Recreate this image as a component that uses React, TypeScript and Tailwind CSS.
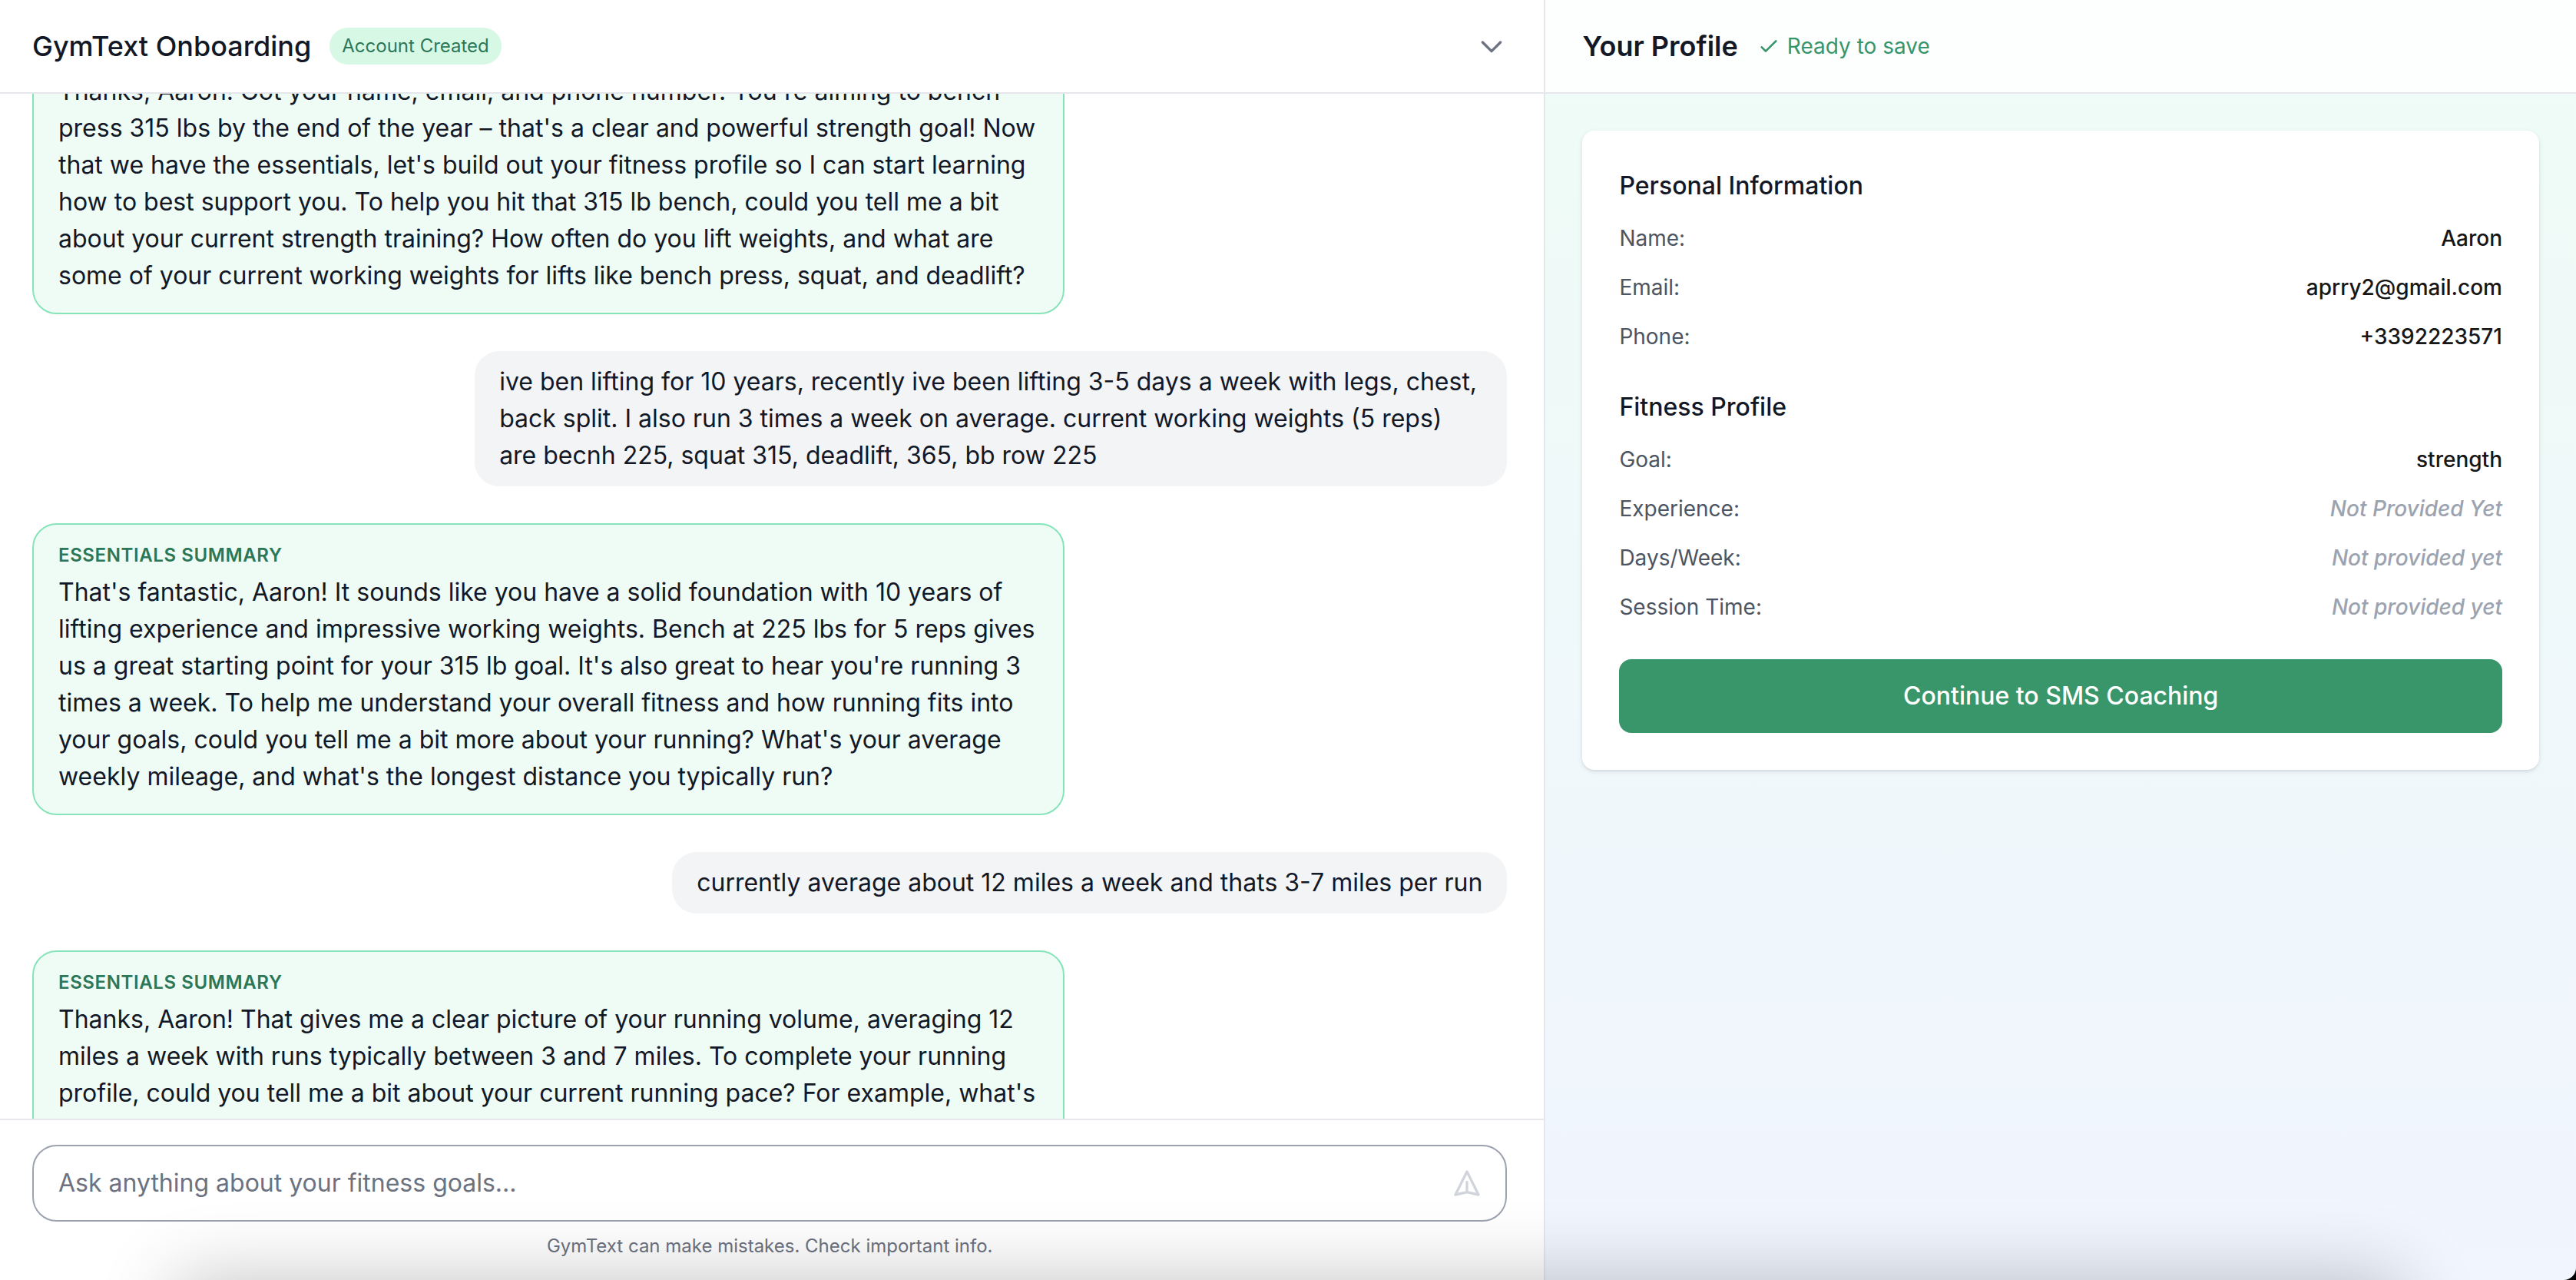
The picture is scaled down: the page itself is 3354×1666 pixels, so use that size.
import { useLayoutEffect, useRef } from "react";

type Message = { from: "coach" | "user"; label?: string; text: string };

const messages: Message[] = [
  {
    from: "coach",
    text: "Thanks, Aaron! Got your name, email, and phone number. You're aiming to bench press 315 lbs by the end of the year – that's a clear and powerful strength goal! Now that we have the essentials, let's build out your fitness profile so I can start learning how to best support you. To help you hit that 315 lb bench, could you tell me a bit about your current strength training? How often do you lift weights, and what are some of your current working weights for lifts like bench press, squat, and deadlift?",
  },
  {
    from: "user",
    text: "ive ben lifting for 10 years, recently ive been lifting 3-5 days a week with legs, chest, back split. I also run 3 times a week on average. current working weights (5 reps) are becnh 225, squat 315, deadlift, 365, bb row 225",
  },
  {
    from: "coach",
    label: "Essentials Summary",
    text: "That's fantastic, Aaron! It sounds like you have a solid foundation with 10 years of lifting experience and impressive working weights. Bench at 225 lbs for 5 reps gives us a great starting point for your 315 lb goal. It's also great to hear you're running 3 times a week. To help me understand your overall fitness and how running fits into your goals, could you tell me a bit more about your running? What's your average weekly mileage, and what's the longest distance you typically run?",
  },
  { from: "user", text: "currently average about 12 miles a week and thats 3-7 miles per run" },
  {
    from: "coach",
    label: "Essentials Summary",
    text: "Thanks, Aaron! That gives me a clear picture of your running volume, averaging 12 miles a week with runs typically between 3 and 7 miles. To complete your running profile, could you tell me a bit about your current running pace? For example, what's",
  },
];

const sections = [
  {
    title: "Personal Information",
    rows: [
      { label: "Name:", value: "Aaron", known: true },
      { label: "Email:", value: "aprry2@gmail.com", known: true },
      { label: "Phone:", value: "+3392223571", known: true },
    ],
  },
  {
    title: "Fitness Profile",
    rows: [
      { label: "Goal:", value: "strength", known: true },
      { label: "Experience:", value: "Not Provided Yet", known: false },
      { label: "Days/Week:", value: "Not provided yet", known: false },
      { label: "Session Time:", value: "Not provided yet", known: false },
    ],
  },
];

function Icon({ d, className }: { d: string; className: string }) {
  return (
    <svg
      viewBox="0 0 24 24"
      fill="none"
      stroke="currentColor"
      strokeWidth={2}
      strokeLinecap="round"
      strokeLinejoin="round"
      aria-hidden="true"
      className={className}
    >
      <path d={d} />
    </svg>
  );
}

function Bubble({ message }: { message: Message }) {
  if (message.from === "user") {
    return (
      <li className="max-w-[70%] self-end rounded-[32px] bg-[#f3f4f6] px-8 py-4">
        <p>{message.text}</p>
      </li>
    );
  }
  return (
    <li className="min-h-80 w-[70%] rounded-[32px] border-2 border-[#87e4ba] bg-[#effcf6] px-8 py-6">
      {message.label && (
        <h2 className="mb-2 text-2xl leading-8 font-semibold tracking-wide text-[#2b7758] uppercase">
          {message.label}
        </h2>
      )}
      <p>{message.text}</p>
    </li>
  );
}

function Conversation() {
  const scroller = useRef<HTMLDivElement>(null);

  useLayoutEffect(() => {
    if (scroller.current) scroller.current.scrollTop = 85;
  }, []);

  return (
    <div
      ref={scroller}
      className="min-h-0 flex-1 overflow-y-auto pt-8 pr-12 pb-12 pl-[42px] [scrollbar-width:none]"
    >
      <ul className="flex flex-col gap-12 text-[32px] leading-[48px]">
        {messages.map((message) => (
          <Bubble key={message.text} message={message} />
        ))}
      </ul>
    </div>
  );
}

function ChatPanel() {
  return (
    <main className="flex w-3/5 flex-col border-r-2 border-[#e5e7eb] bg-white">
      <header className="flex items-center justify-between border-b-2 border-[#e5e7eb] py-8 pr-12 pl-[42px]">
        <div className="flex items-center gap-6">
          <h1 className="text-4xl leading-[56px] font-medium">GymText Onboarding</h1>
          <span className="rounded-full bg-[#d8f8e6] px-4 py-2 text-2xl leading-8 text-[#2b7758]">
            Account Created
          </span>
        </div>
        <button type="button" aria-label="Collapse conversation" className="text-[#6c727f]">
          <Icon d="M19 9l-7 7-7-7" className="size-10" />
        </button>
      </header>

      <Conversation />

      <footer className="border-t-2 border-[#e5e7eb] pt-8 pr-12 pb-7 pl-[42px]">
        <form className="flex items-center rounded-[32px] border-2 border-[#9ca3af] py-6 pr-[30px] pl-8">
          <input
            type="text"
            aria-label="Message"
            placeholder="Ask anything about your fitness goals..."
            className="min-w-0 flex-1 text-[32px] leading-[48px] outline-none placeholder:text-[#6c727f]"
          />
          <button type="button" aria-label="Send" className="text-[#d1d5db]">
            <Icon d="M12 19l9 2-9-18-9 18 9-2zm0 0v-8" className="size-10" />
          </button>
        </form>
        <p className="mt-4 text-center text-2xl leading-8 text-[#6c727f]">
          GymText can make mistakes. Check important info.
        </p>
      </footer>
    </main>
  );
}

function ProfilePanel() {
  return (
    <aside className="flex w-2/5 flex-col bg-linear-to-b from-[#effcf6] to-[#f0f5fe]">
      <header className="flex items-center gap-6 border-b-2 border-[#e5e7eb] bg-white/90 px-12 py-8">
        <h2 className="text-4xl leading-[56px] font-semibold">Your Profile</h2>
        <p className="flex items-center gap-2 text-[28px] leading-10 text-[#36956b]">
          <Icon d="M5 13l4 4L19 7" className="size-8" />
          Ready to save
        </p>
      </header>
      <div className="p-12">
        <div className="flex flex-col gap-12 rounded-2xl bg-white p-12 shadow-[0_2px_6px_rgba(0,0,0,0.1),0_2px_4px_-2px_rgba(0,0,0,0.1)]">
          {sections.map((section) => (
            <section key={section.title} className="flex flex-col gap-6">
              <h3 className="text-[32px] leading-[48px] font-medium">{section.title}</h3>
              <dl className="flex flex-col gap-6 text-[28px] leading-10">
                {section.rows.map((row) => (
                  <div key={row.label} className="flex justify-between">
                    <dt className="text-[#4d5562]">{row.label}</dt>
                    <dd
                      className={
                        row.known
                          ? "font-medium text-[#171717]"
                          : "font-medium text-[#9ca3af] italic"
                      }
                    >
                      {row.value}
                    </dd>
                  </div>
                ))}
              </dl>
            </section>
          ))}
          <button
            type="button"
            className="rounded-2xl bg-[#38966a] py-6 text-[32px] leading-[48px] font-medium text-white"
          >
            Continue to SMS Coaching
          </button>
        </div>
      </div>
    </aside>
  );
}

export default function App() {
  return (
    <div className="bg-black">
      <div className="relative flex h-screen overflow-hidden rounded-br-2xl font-[Inter,sans-serif] text-[#121826]">
        <ChatPanel />
        <ProfilePanel />
        <div className="pointer-events-none absolute inset-x-[228px] top-full h-40 shadow-[0_0_100px_rgba(0,0,0,0.24)]" />
      </div>
    </div>
  );
}
